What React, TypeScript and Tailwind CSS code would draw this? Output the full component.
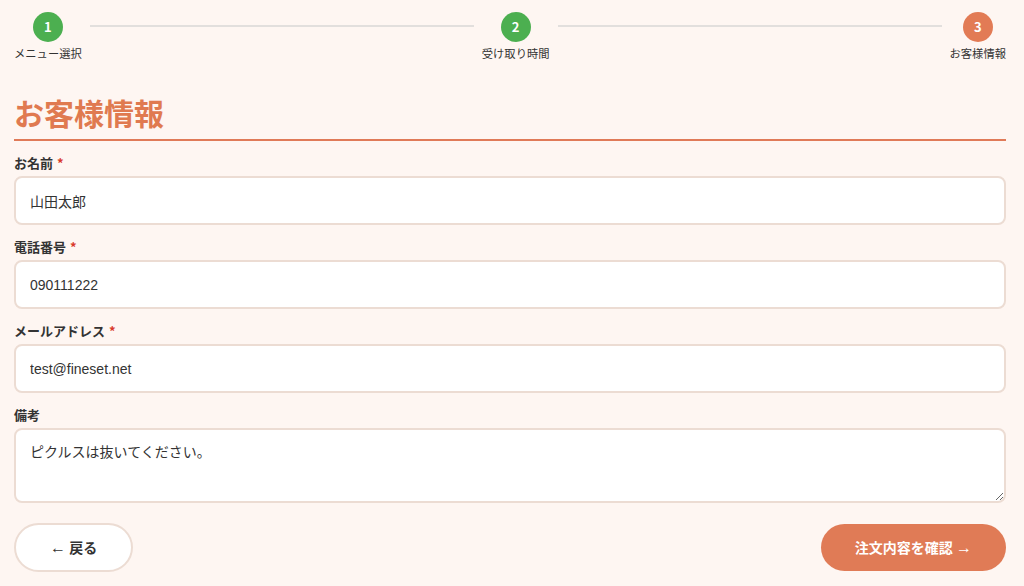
import { useState } from "react";

const steps = [
  { no: 1, label: "メニュー選択", done: true },
  { no: 2, label: "受け取り時間", done: true },
  { no: 3, label: "お客様情報", done: false },
];

function Stepper() {
  return (
    <div className="flex items-start pt-[12px]">
      {steps.map((s, i) => (
        <div key={s.no} className="contents">
          <div className="flex flex-col items-center">
            <div
              className={
                "w-[30px] h-[30px] rounded-full flex items-center justify-center text-white text-[13px] font-bold " +
                (s.done ? "bg-[#4caf50]" : "bg-[#e27b55]")
              }
            >
              {s.no}
            </div>
            <div className="mt-[3px] text-[11.3px] leading-[16px] text-[#333] whitespace-nowrap">{s.label}</div>
          </div>
          {i < steps.length - 1 && <div className="flex-1 h-[2px] mt-[13px] mx-[8px] bg-[#e2dfdd]" />}
        </div>
      ))}
    </div>
  );
}

function Label({ text, required }: { text: string; required?: boolean }) {
  return (
    <label className="block text-[13px] leading-[20px] font-bold text-[#333] mb-[3px]">
      {text}
      {required && <span className="ml-[4px] text-[#d93a2b]">*</span>}
    </label>
  );
}

const inputCls =
  "w-full h-[49px] rounded-[8px] border-2 border-[#ecdcd3] bg-white px-[14px] text-[14px] text-[#333] outline-none font-['Liberation_Sans','Noto_Sans_CJK_JP',sans-serif]";

export default function App() {
  const [name, setName] = useState("山田太郎");
  const [tel, setTel] = useState("090111222");
  const [mail, setMail] = useState("test@fineset.net");
  const [note, setNote] = useState("ピクルスは抜いてください。");

  return (
    <div className="min-h-screen bg-[#fef6f2] pl-[14px] pr-[18px] font-['Noto_Sans_CJK_JP',sans-serif]">
      <Stepper />

      <h1 className="mt-[29px] pb-[4px] text-[30px] leading-[45px] font-bold text-[#e07a50] border-b-2 border-[#e07a58]">
        お客様情報
      </h1>

      <div className="mt-[12px] flex flex-col gap-[12px]">
        <div>
          <Label text="お名前" required />
          <input className={inputCls} value={name} onChange={(e) => setName(e.target.value)} />
        </div>
        <div>
          <Label text="電話番号" required />
          <input className={inputCls} value={tel} onChange={(e) => setTel(e.target.value)} />
        </div>
        <div>
          <Label text="メールアドレス" required />
          <input className={inputCls} value={mail} onChange={(e) => setMail(e.target.value)} />
        </div>
        <div>
          <Label text="備考" />
          <textarea
            className="block w-full h-[75px] rounded-[8px] border-2 border-[#ecdcd3] bg-white px-[14px] py-[12px] text-[14px] leading-[20px] text-[#333] outline-none font-['Liberation_Sans','Noto_Sans_CJK_JP',sans-serif]"
            value={note}
            onChange={(e) => setNote(e.target.value)}
          />
        </div>
      </div>

      <div className="mt-[20px] flex items-center justify-between">
        <button className="h-[49px] px-[34px] rounded-full border-2 border-[#ecdcd3] bg-white text-[14px] font-bold text-[#333]">
          <span className="font-['Liberation_Sans',sans-serif] font-normal text-[16px]">←</span> 戻る
        </button>
        <button className="h-[47px] px-[34px] rounded-full bg-[#e07b56] text-[14px] font-bold text-white">
          注文内容を確認 <span className="font-['Liberation_Sans',sans-serif] font-normal text-[16px]">→</span>
        </button>
      </div>
    </div>
  );
}
